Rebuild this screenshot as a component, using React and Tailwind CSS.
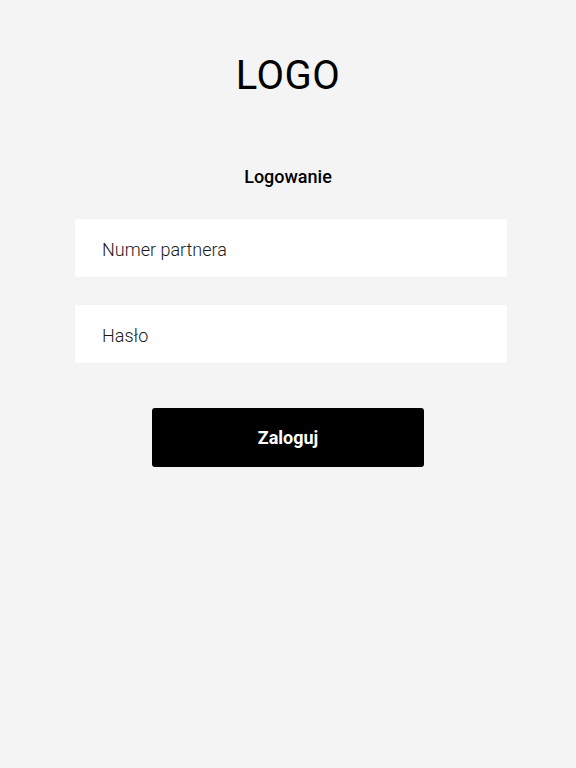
export default function App() {
  return (
    <div className="min-h-[768px] w-full bg-[#f4f4f4] flex flex-col items-center" style={{ fontFamily: "Roboto, 'Noto Sans', sans-serif" }}>
      <div className="mt-[49px] h-[54px] flex items-center text-[40px] leading-none font-normal text-black tracking-[0.5px]">LOGO</div>
      <div className="mt-[61px] h-[24px] flex items-center text-[18px] font-medium text-black">Logowanie</div>
      <div className="mt-[31px] ml-[6px] w-[432px] flex flex-col gap-[28px]">
        <div className="h-[58px] bg-white rounded-[2px] flex items-center pl-[27px] pt-[3px] text-[18px] font-light text-[#1a1a1a]">Numer partnera</div>
        <div className="h-[58px] bg-white rounded-[2px] flex items-center pl-[27px] pt-[3px] text-[18px] font-light text-[#1a1a1a]">Hasło</div>
      </div>
      <div className="mt-[45px] w-[272px] h-[59px] bg-black rounded-[3px] flex items-center justify-center text-white text-[18px] font-bold">Zaloguj</div>
    </div>
  );
}
